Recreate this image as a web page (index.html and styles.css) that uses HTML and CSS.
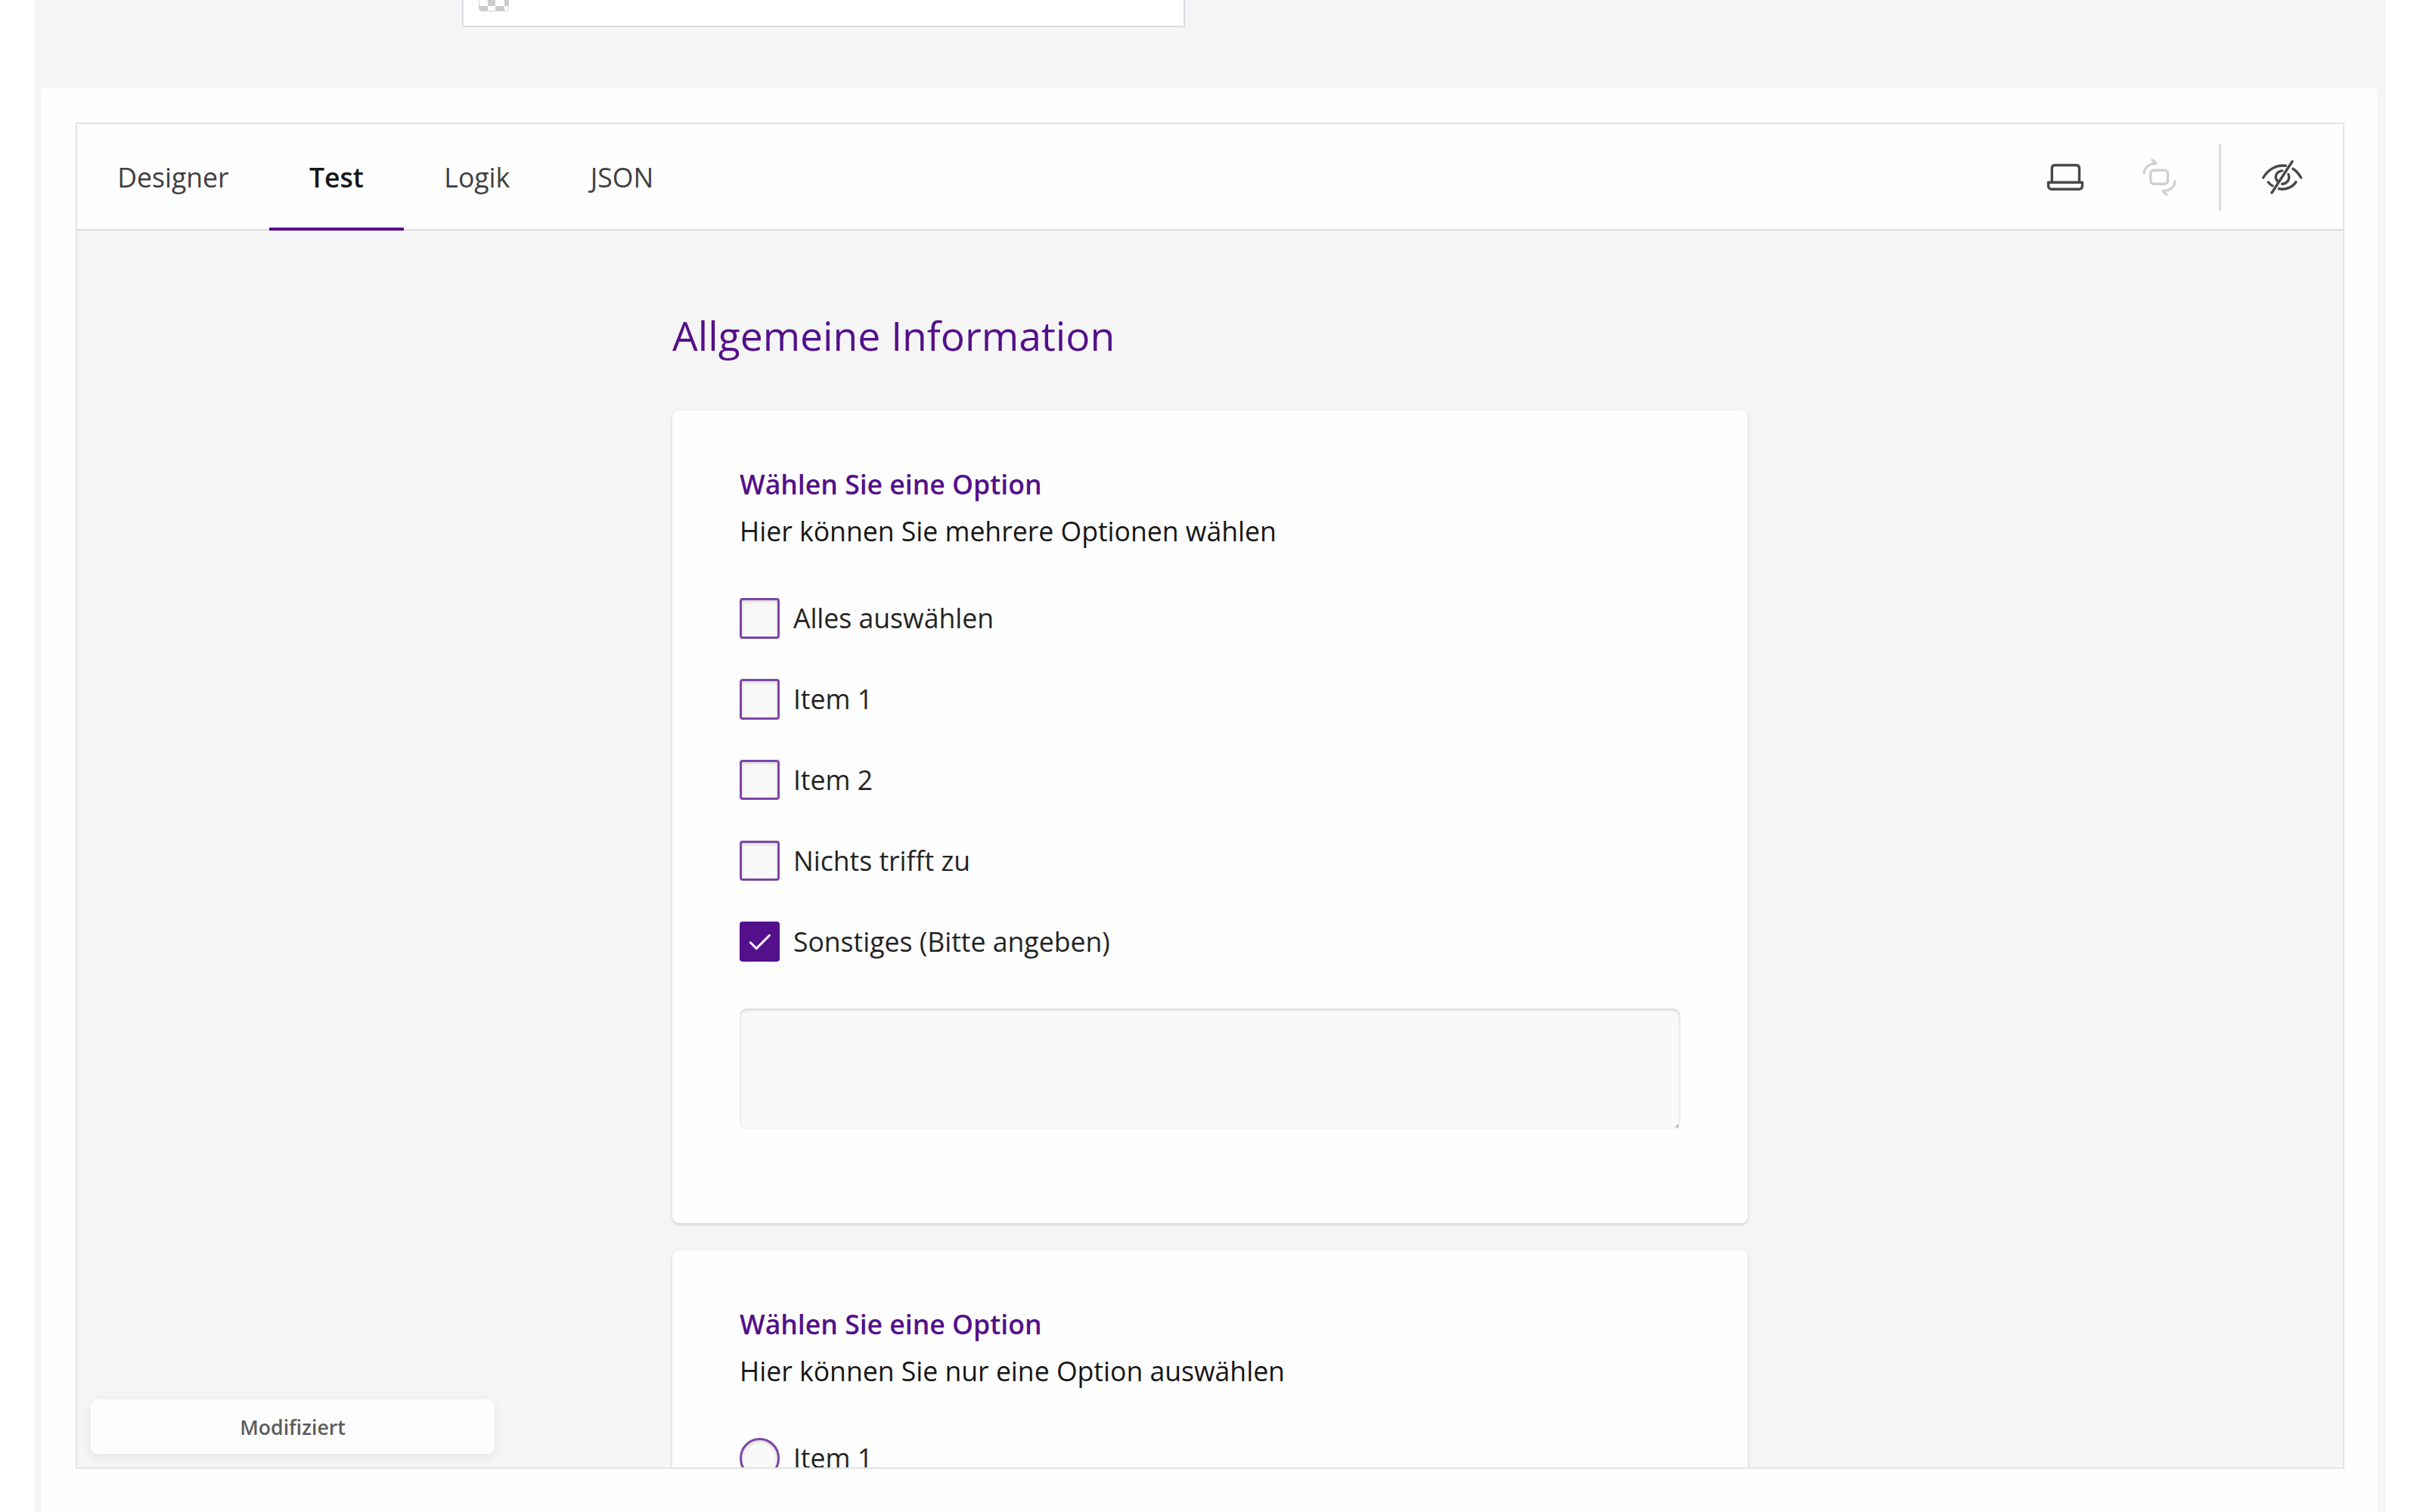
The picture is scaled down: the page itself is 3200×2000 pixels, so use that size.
FILE: index.html
```
<!DOCTYPE html>
<html lang="de">
<head>
    <meta charset="UTF-8">
    <meta name="viewport" content="width=device-width, initial-scale=1.0">
    <title>Formular Designer</title>
    <link rel="stylesheet" href="styles.css">
</head>
<body>
    <div class="page">
        <div class="color-field">
            <svg class="swatch" width="40" height="15" viewBox="0 0 40 15">
                <path d="M0.5 0V11.5Q0.5 14.5 4 14.5H36Q39.5 14.5 39.5 11V0" fill="#fff" stroke="#cfcfcf"/>
                <path d="M12 0h10v8h-10zM34 0h5v8h-5zM1 8h11v6H3Q1 14 1 12zM22 8h12v6H22z" fill="#cbcbcb"/>
            </svg>
        </div>

        <div class="panel">
            <div class="creator">
                <div class="tabbar">
                    <div class="tab">Designer</div>
                    <div class="tab active">Test</div>
                    <div class="tab">Logik</div>
                    <div class="tab">JSON</div>

                    <div class="actions">
                        <svg class="icon" viewBox="0 0 54 54">
                            <path d="M9.3 33V14.5Q9.3 10.5 13.3 10.5H41.5Q45.5 10.5 45.5 14.5V33"/>
                            <path d="M4.5 33.3H49.5V37.4Q49.5 42.2 44.7 42.2H9.3Q4.5 42.2 4.5 37.4Z"/>
                        </svg>
                        <svg class="icon disabled" viewBox="0 0 54 54">
                            <rect x="15.8" y="17.2" width="22.7" height="18" rx="4"/>
                            <path d="M7 21C8 13 14 8.5 23 8.3L18 3.5"/>
                            <path d="M48 32C47.5 39 42 44 32 44.4L36.7 49.5"/>
                        </svg>
                        <div class="divider"></div>
                        <svg class="icon" viewBox="0 0 54 54">
                            <path d="M40 5.7L13 47"/>
                            <path d="M1.7 27C7.5 17 19 9.2 31.5 11.3"/>
                            <path d="M41 15.3Q47 19 51.7 27"/>
                            <path d="M8.3 33Q11 36.3 14 37.7"/>
                            <path d="M22.3 41.7C31 43.6 40 40 45 32.7"/>
                            <path d="M26.7 17.9C19 19 15.5 26 21 32"/>
                            <path d="M35 22.7C37.5 29 33.5 35 26.7 35.3"/>
                        </svg>
                    </div>
                </div>

                <div class="content">
                    <div class="survey">
                        <h1>Allgemeine Information</h1>

                        <div class="question first">
                            <h2>Wählen Sie eine Option</h2>
                            <p>Hier können Sie mehrere Optionen wählen</p>
                            <div class="items">
                                <label class="item"><span class="box"></span>Alles auswählen</label>
                                <label class="item"><span class="box"></span>Item 1</label>
                                <label class="item"><span class="box"></span>Item 2</label>
                                <label class="item"><span class="box"></span>Nichts trifft zu</label>
                                <label class="item">
                                    <span class="box checked">
                                        <svg viewBox="0 0 54 54"><path d="M14.5 28L22.5 36L40 18.5"/></svg>
                                    </span>Sonstiges (Bitte angeben)
                                </label>
                            </div>
                            <div class="comment">
                                <svg class="grip" width="5" height="5" viewBox="0 0 5 5"><path d="M0.5 4.5L4.5 0.5M3 4.8L4.8 3"/></svg>
                            </div>
                        </div>

                        <div class="question">
                            <h2>Wählen Sie eine Option</h2>
                            <p>Hier können Sie nur eine Option auswählen</p>
                            <div class="items">
                                <label class="item"><span class="box radio"></span>Item 1</label>
                            </div>
                        </div>
                    </div>

                    <div class="notifier">Modifiziert</div>
                </div>
            </div>
        </div>
    </div>
</body>
</html>
```
FILE: styles.css
```
* {
    box-sizing: border-box;
}

body {
    margin: 0;
    height: 2000px;
    overflow: hidden;
    background: #fff;
    font-family: "Open Sans", sans-serif;
    font-size: 35.6px;
    line-height: 53.4px;
    color: #161616;
}

.page {
    width: 3110px;
    height: 2000px;
    margin-left: 45px;
    padding: 0 11px 0 10px;
    background: #f5f5f5;
}

.color-field {
    width: 956px;
    height: 36px;
    margin-left: 556px;
    margin-bottom: 81px;
    padding-left: 20px;
    background: #fff;
    border: 2px solid #d9dce1;
    border-top: none;
}

.swatch {
    display: block;
}

.panel {
    height: 1883px;
    padding: 45px 44px 0 45px;
    background: #fefefe;
}

.creator {
    height: 1781px;
    display: flex;
    flex-direction: column;
    border: 2px solid #e1e4e8;
}

/* tabs */
.tabbar {
    display: flex;
    height: 141px;
    flex-shrink: 0;
    background: #fefefe;
    border-bottom: 2px solid #dcdcdc;
}

.tab {
    height: 141px;
    padding: 44px 53.2px 0;
    color: #404040;
}

.tab.active {
    font-weight: 600;
    color: #161616;
    border-bottom: 4px solid #54108a;
}

.actions {
    display: flex;
    align-items: center;
    margin-left: auto;
    padding-top: 2px;
    padding-right: 53px;
}

.icon {
    width: 54px;
    height: 54px;
    fill: none;
    stroke: #484848;
    stroke-width: 3.4;
    stroke-linecap: round;
    stroke-linejoin: round;
}

.icon.disabled {
    margin-left: 70px;
    stroke: #d0d0d0;
}

.divider {
    width: 3px;
    height: 89px;
    margin: 0 54px 0 52px;
    background: #dcdcdc;
}

/* survey */
.content {
    position: relative;
    flex: 1;
    min-height: 0;
    overflow: hidden;
    background: #f5f5f5;
}

.survey {
    width: 1422px;
    margin: 0 auto;
    padding-top: 103px;
}

h1 {
    margin: 0 0 64px;
    font-size: 53.4px;
    font-weight: 400;
    line-height: 71px;
    color: #54108a;
}

.question {
    height: 1075px;
    margin-bottom: 36px;
    padding: 71px 89px 0;
    background: #fefefe;
    border-radius: 9px;
    box-shadow: 0 2px 4px rgba(0, 0, 0, 0.15);
}

h2 {
    margin: 0 0 8.5px;
    font-size: 35.6px;
    font-weight: 600;
    line-height: 53.4px;
    color: #54108a;
}

p {
    margin: 0 0 62px;
}

.items {
    display: flex;
    flex-direction: column;
    gap: 53.1px;
    margin-bottom: 62px;
}

.item {
    display: flex;
    align-items: center;
    gap: 17.5px;
    height: 53.7px;
    color: #242424;
}

.box {
    width: 53.4px;
    height: 53.4px;
    background: #f9f9f9;
    border: 3px solid #7d45a8;
    border-radius: 4px;
    box-shadow: inset 0 2px 4px rgba(0, 0, 0, 0.15);
}

.box.radio {
    border-radius: 50%;
}

.box.checked {
    background: #54108a;
    border: none;
    box-shadow: none;
}

.box svg {
    display: block;
    fill: none;
    stroke: #fff;
    stroke-width: 3;
    stroke-linecap: round;
}

.comment {
    display: flex;
    align-items: flex-end;
    justify-content: flex-end;
    height: 160px;
    padding: 0 2px 2px 0;
    background: #f9f9f9;
    border-radius: 9px;
    box-shadow: inset 0 2px 4px rgba(0, 0, 0, 0.15);
}

.grip path {
    stroke: #666;
}

/* lies over the survey */
.notifier {
    position: absolute;
    left: 18px;
    bottom: 18px;
    width: 534px;
    height: 72px;
    background: #fdfdfd;
    border-radius: 9px;
    box-shadow: 0 4px 14px rgba(0, 30, 20, 0.08);
    font-size: 26.7px;
    font-weight: 600;
    line-height: 73px;
    text-align: center;
    color: #5c5c5c;
}
```
